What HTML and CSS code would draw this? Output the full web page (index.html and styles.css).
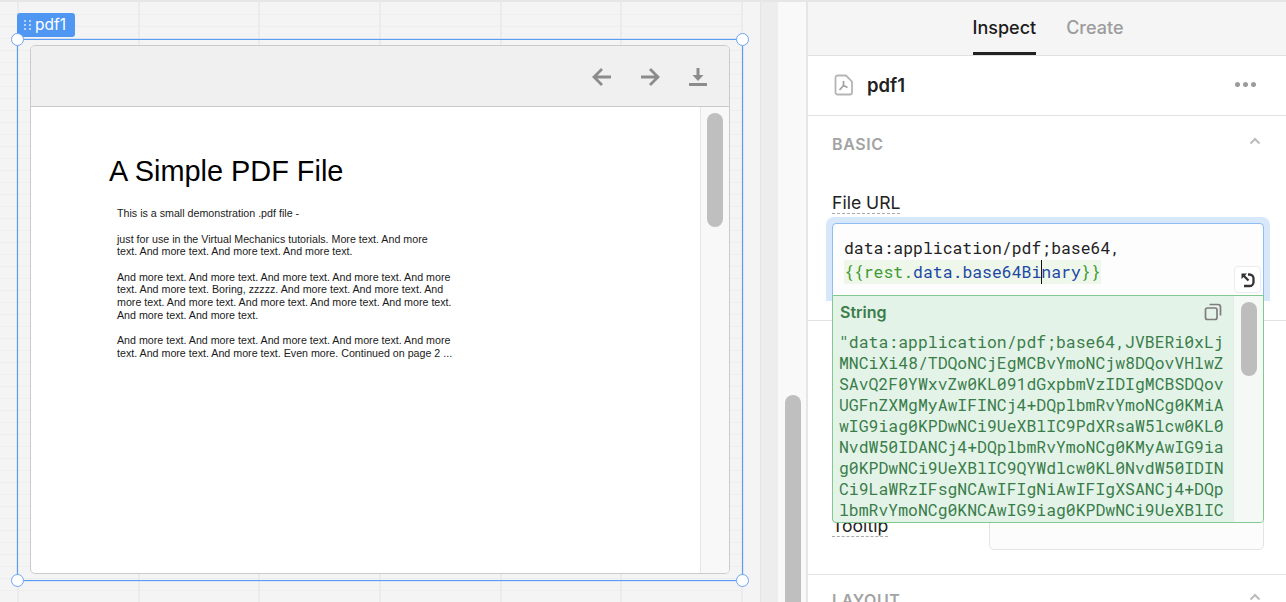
FILE: index.html
```
<!DOCTYPE html>
<html lang="en">
<head>
<meta charset="utf-8">
<title>pdf1</title>
<link rel="stylesheet" href="styles.css">
</head>
<body>
<div class="app">
  <main class="canvas">
    <div class="tag">
      <svg class="tag-grip" width="10" height="12" viewBox="0 0 10 12"><g fill="#cfe2fb"><circle cx="2" cy="2" r="1.1"/><circle cx="7" cy="2" r="1.1"/><circle cx="2" cy="6" r="1.1"/><circle cx="7" cy="6" r="1.1"/><circle cx="2" cy="10" r="1.1"/><circle cx="7" cy="10" r="1.1"/></g></svg>
      <span>pdf1</span>
    </div>
    <div class="frame">
      <i class="handle tl"></i><i class="handle tr"></i><i class="handle bl"></i><i class="handle br"></i>
      <div class="viewer">
        <div class="toolbar">
          <svg width="20" height="20" viewBox="0 0 20 20" fill="none" stroke="#8c8c8c" stroke-width="2.8"><path d="M19 10H2.500M10 2l-8 8 8 8"/></svg>
          <svg width="20" height="20" viewBox="0 0 20 20" fill="none" stroke="#8c8c8c" stroke-width="2.8"><path d="M1 10h16.500M10 2l8 8-8 8"/></svg>
          <svg width="20" height="20" viewBox="0 0 20 20"><path fill="#8c8c8c" d="M8.500 1h3v7h4l-5.500 6L4.500 8h4zM1 16h18v3H1z"/></svg>
        </div>
        <div class="doc">
          <div class="page">
            <h1 class="page-title">A Simple PDF File</h1>
            <p class="page-text">This is a small demonstration .pdf file -</p>
            <p class="page-text">just for use in the Virtual Mechanics tutorials. More text. And more<br>text. And more text. And more text. And more text.</p>
            <p class="page-text">And more text. And more text. And more text. And more text. And more<br>text. And more text. Boring, zzzzz. And more text. And more text. And<br>more text. And more text. And more text. And more text. And more text.<br>And more text. And more text.</p>
            <p class="page-text">And more text. And more text. And more text. And more text. And more<br>text. And more text. And more text. Even more. Continued on page 2 ...</p>
          </div>
          <div class="doc-scroll"><div class="doc-thumb"></div></div>
        </div>
      </div>
    </div>
  </main>
  <div class="gutter"></div>
  <div class="side-scroll"><div class="side-thumb"></div></div>
  <aside class="panel">
    <nav class="tabs">
      <span class="tab active">Inspect</span>
      <span class="tab">Create</span>
    </nav>
    <header class="head">
      <svg width="20" height="22" viewBox="0 0 20 22" fill="none"><path d="M3.500 1.500h8.500l6 6v11a2 2 0 0 1-2 2H3.500a2 2 0 0 1-2-2v-15a2 2 0 0 1 2-2z" stroke="#b5b5b5" stroke-width="1.800"/><path d="M5.500 16l4-4.500M9.500 7v4.500l4 2M9.500 11.500" stroke="#a0a0a0" stroke-width="1.700"/></svg>
      <strong class="head-name">pdf1</strong>
      <span class="dots"><i></i><i></i><i></i></span>
    </header>
    <section class="section basic">
      <div class="section-head">
        <span class="section-title">BASIC</span>
        <svg width="12" height="8" viewBox="0 0 12 8" fill="none" stroke="#bdbdbd" stroke-width="2.200"><path d="M1.500 6.500L6 2l4.500 4.500"/></svg>
      </div>
      <label class="field-label url-label">File URL</label>
      <div class="editor-glow">
        <div class="editor">
          <div class="code">data:application/pdf;base64,</div>
          <div class="code"><span class="binding">{{rest.<b class="ref">data.base64Bi<i class="caret"></i>nary</b>}}</span></div>
          <button class="restore" type="button">
            <svg width="16" height="16" viewBox="0 0 16 16" fill="none" stroke="#333" stroke-width="2.300"><path d="M8 2.500h1.500a4 4 0 0 1 4 4v3.500a4 4 0 0 1-4 4H4"/><path d="M3 3l5.500 5.500"/><path d="M1.500 1.500h5.500l-5.500 5.500z" fill="#333" stroke="none"/></svg>
          </button>
        </div>
      </div>
    </section>
    <section class="section extra">
      <div class="tooltip-row">
        <label class="field-label">Tooltip</label>
        <div class="tooltip-input"></div>
      </div>
    </section>
    <section class="section layout">
      <div class="section-head">
        <span class="section-title">LAYOUT</span>
        <svg width="12" height="8" viewBox="0 0 12 8" fill="none" stroke="#bdbdbd" stroke-width="2.200"><path d="M1.500 6.500L6 2l4.500 4.500"/></svg>
      </div>
    </section>
    <div class="popover">
      <div class="pop-body">
        <div class="pop-head">
          <span class="pop-type">String</span>
          <svg width="18" height="18" viewBox="0 0 18 18" fill="none" stroke="#7d7d7d" stroke-width="1.700"><rect x="1.500" y="5" width="11.500" height="11.500" rx="2"/><path d="M5.500 1.500H14a2.500 2.500 0 0 1 2.500 2.500v8.500"/></svg>
        </div>
        <div class="pop-value">"data:application/pdf;base64,JVBERi0xLj<br>MNCiXi48/TDQoNCjEgMCBvYmoNCjw8DQovVHlwZ<br>SAvQ2F0YWxvZw0KL091dGxpbmVzIDIgMCBSDQov<br>UGFnZXMgMyAwIFINCj4+DQplbmRvYmoNCg0KMiA<br>wIG9iag0KPDwNCi9UeXBlIC9PdXRsaW5lcw0KL0<br>NvdW50IDANCj4+DQplbmRvYmoNCg0KMyAwIG9ia<br>g0KPDwNCi9UeXBlIC9QYWdlcw0KL0NvdW50IDIN<br>Ci9LaWRzIFsgNCAwIFIgNiAwIFIgXSANCj4+DQp<br>lbmRvYmoNCg0KNCAwIG9iag0KPDwNCi9UeXBlIC</div>
      </div>
      <div class="pop-scroll"><div class="pop-thumb"></div></div>
    </div>
  </aside>
</div>
</body>
</html>
```
FILE: styles.css
```
* { box-sizing: border-box; }
html, body { margin: 0; height: 100%; overflow: hidden; }
body { font-family: Inter, "Liberation Sans", sans-serif; color: #222; background: #fff; }
.app { display: flex; width: 1286px; height: 602px; overflow: hidden; }

.canvas {
  position: relative;
  width: 761px;
  flex: none;
  border-top: 2px solid #e6e6e6;
  background-color: #f4f4f4;
  background-image:
    repeating-linear-gradient(90deg, transparent 0 17px, #ebebeb 17px 19px, transparent 19px 120.7px),
    repeating-linear-gradient(180deg, transparent 0 11px, #eeeeee 11px 12px);
  background-size: 743px 100%, 743px 100%;
  background-position: 0 0, 0 1px;
  background-repeat: no-repeat;
  border-right: 1px solid #e4e4e4;
}
.tag {
  position: absolute;
  left: 17px; top: 11px;
  width: 58px; height: 24px;
  display: flex; align-items: center; gap: 2px;
  padding-left: 6px;
  background: #4f97f3;
  border-radius: 3px 3px 3px 0;
  color: #fff;
  font-size: 15.500px;
  line-height: 24px;
}
.tag-grip { flex: none; }
.frame {
  position: absolute;
  left: 17px; top: 37px;
  width: 726px; height: 542px;
  border: 1px solid #5b9df5;
  box-shadow: 0 0 1px #6ea6f6;
  padding: 5px 12px 6px 12px;
}
.handle {
  position: absolute;
  width: 13px; height: 13px;
  border-radius: 50%;
  background: #fff;
  border: 1.500px solid #6ea6f6;
}
.tl { left: -7px; top: -7px; }
.tr { right: -7px; top: -7px; }
.bl { left: -7px; bottom: -7px; }
.br { right: -7px; bottom: -7px; }

.viewer {
  height: 100%;
  display: flex; flex-direction: column;
  background: #fff;
  border: 1px solid #cbcbcb;
  border-radius: 5px;
  overflow: hidden;
}
.toolbar {
  flex: none;
  height: 61px;
  display: flex; align-items: center; justify-content: flex-end;
  gap: 28px;
  padding: 2px 21px 0 0;
  background: #f0f0f0;
  border-bottom: 1px solid #c9c9c9;
}
.doc { flex: 1; display: flex; min-height: 0; }
.page { flex: 1; padding: 47px 0 0 78px; font-family: "Liberation Sans", Arial, sans-serif; color: #1a1a1a; }
.page-title { margin: 0 0 19px; font-size: 28.900px; font-weight: 400; line-height: 34px; color: #000; }
.page-text { margin: 0 0 12.800px 8px; font-size: 10.680px; line-height: 12.700px; white-space: nowrap; }
.doc-scroll {
  flex: none; width: 29px;
  padding: 6px 6px 0 6px;
  background: #f8f8f8;
  border-left: 1px solid #e6e6e6;
}
.doc-thumb { width: 16px; height: 114px; background: #bfbfbf; border-radius: 8px; }

.gutter { flex: none; width: 17px; background: #ededed; border-top: 2px solid #e6e6e6; }
.side-scroll {
  flex: none; width: 30px;
  padding: 393px 6px 0 7px;
  background: #f9f9f9;
  border-top: 2px solid #e6e6e6;
  border-right: 2px solid #e6e6e6;
}
.side-thumb { width: 16px; height: 240px; background: #bfbfbf; border-radius: 8px 8px 0 0; }

.panel { position: relative; flex: 1; min-width: 0; display: flex; flex-direction: column; }
.tabs {
  flex: none; height: 56px;
  display: flex; justify-content: center; gap: 30px;
  padding-left: 2px;
  border-top: 2px solid #e6e6e6;
  border-bottom: 1px solid #e0e0e0;
  background: #f5f5f5;
  font-size: 18px; font-weight: 500;
}
.tab { height: 53px; padding: 14px 0 0; line-height: 24px; color: #9c9c9c; }
.tab.active { color: #1c1c1c; border-bottom: 3px solid #222; }
.head {
  flex: none; height: 60px;
  display: flex; align-items: center;
  padding: 0 30px 2px 26px;
  border-bottom: 1px solid #e2e2e2;
}
.head-name { margin-left: 13px; font-size: 18.500px; font-weight: 600; color: #222; }
.dots { margin-left: auto; display: flex; gap: 3px; }
.dots i { width: 5px; height: 5px; border-radius: 50%; background: #9b9b9b; }

.section { flex: none; padding: 0 22px 0 24px; border-bottom: 1px solid #e2e2e2; }
.section-head { display: flex; align-items: center; justify-content: space-between; }
.section-title { font-size: 16px; font-weight: 600; letter-spacing: .6px; color: #a3a3a3; line-height: 20px; }
.section-head svg { margin: 0 3px 6px 0; }
.basic { height: 205px; padding-top: 18px; }
.field-label {
  font-size: 17.600px; line-height: 20px; color: #222;
  border-bottom: 1px dashed #aaa;
  display: inline-block;
}
.url-label { margin-top: 39px; }
.editor-glow {
  height: 84px;
  margin: 3px -6px 0;
  padding: 6px 6px 0;
  background: #d7e8fa;
  border-radius: 8px 8px 0 0;
}
.editor {
  position: relative;
  height: 78px;
  padding: 12px 11px;
  background: #fdfdfd;
  border: 1px solid #8fbdf3;
  border-radius: 4px;
}
.code { font-family: "Roboto Mono", "Liberation Mono", monospace; font-size: 16.460px; line-height: 24px; color: #222; white-space: pre; }
.binding { display: inline-block; background: #eef7ea; color: #3f9a35; }
.ref { font-weight: 400; color: #2147a5; position: relative; }
.caret { display: inline-block; width: 1px; height: 24px; margin: 0 -1px 0 0; background: #111; vertical-align: top; }
.restore {
  position: absolute; right: 2px; top: 42px;
  width: 27px; height: 27px;
  padding: 0;
  display: flex; align-items: center; justify-content: center;
  background: #fff;
  border: 1px solid #ececec;
  border-radius: 4px;
}
.extra { height: 254px; position: relative; }
.tooltip-row { position: absolute; left: 24px; right: 22px; top: 194px; display: flex; justify-content: space-between; }
.tooltip-row .field-label { height: 21px; margin-top: 1px; }
.tooltip-input {
  width: 275px; height: 35px;
  background: #fcfcfc;
  border: 1px solid #e4e4e4;
  border-radius: 5px;
}
.layout { padding-top: 15px; border-bottom: 0; }

.popover {
  position: absolute;
  left: 24px; top: 295px;
  width: 432px; height: 228px;
  display: flex;
  background: #e4f3e8;
  border: 1px solid #82c98f;
  border-radius: 0 0 4px 4px;
  overflow: hidden;
}
.pop-body { flex: 1; min-width: 0; padding: 5px 0 0 7px; color: #3a7d4b; }
.pop-head { display: flex; align-items: center; justify-content: space-between; padding-right: 11px; height: 22px; }
.pop-type { font-size: 16px; font-weight: 600; line-height: 22px; }
.pop-value { margin: 8px 0 0 -1px; font-family: "Roboto Mono", "Liberation Mono", monospace; font-size: 16.460px; line-height: 21px; white-space: pre; }
.pop-scroll { flex: none; width: 30px; padding: 6px 6px 0 7px; background: #f4f9f5; border-left: 1px solid #e7ebe8; }
.pop-thumb { width: 16px; height: 74px; background: #bdbdbd; border-radius: 8px; }
```
